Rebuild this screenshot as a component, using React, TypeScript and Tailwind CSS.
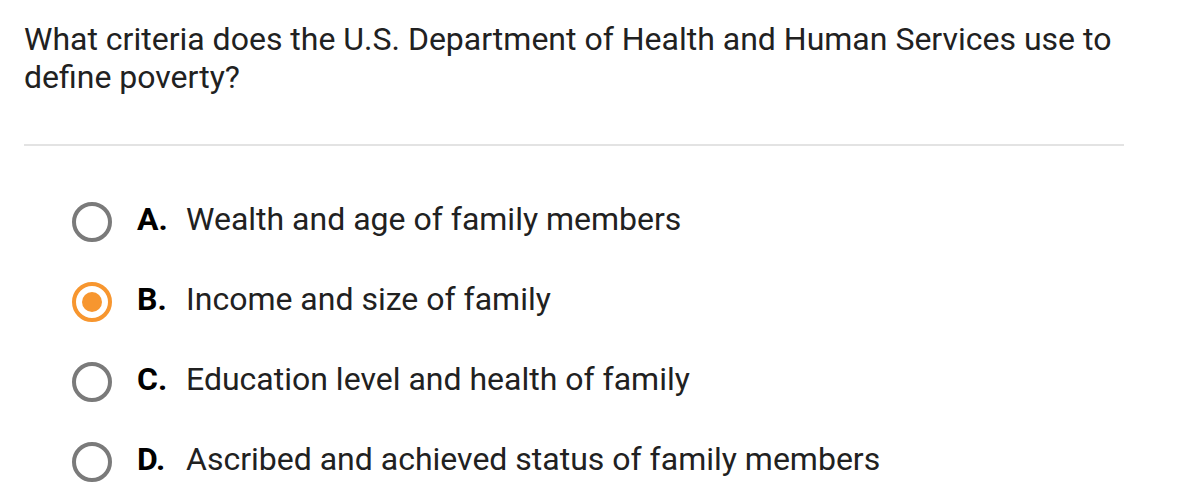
const options = [
  { letter: "A.", text: "Wealth and age of family members", selected: false },
  { letter: "B.", text: "Income and size of family", selected: true },
  { letter: "C.", text: "Education level and health of family", selected: false },
  { letter: "D.", text: "Ascribed and achieved status of family members", selected: false },
];

function Radio({ selected }: { selected: boolean }) {
  if (selected) {
    return (
      <span className="mt-[5px] flex h-[40px] w-[40px] shrink-0 items-center justify-center rounded-full border-[4px] border-[#f7962f]">
        <span className="h-[20px] w-[20px] rounded-full bg-[#f7962f]" />
      </span>
    );
  }
  return <span className="mt-[5px] h-[40px] w-[40px] shrink-0 rounded-full border-[4px] border-[#7a7a7a]" />;
}

export default function App() {
  return (
    <div className="min-h-screen bg-white pl-[24px] pr-[60px] pt-[20px] text-[#212121] [font-family:Roboto,'Noto_Sans',sans-serif]">
      <h1 className="text-[32px] font-normal leading-[38px]">
        What criteria does the U.S. Department of Health and Human Services use to define poverty?
      </h1>
      <div className="mt-[48px] h-[2px] w-[1100px] bg-[#e3e3e3]" />
      <div className="mt-[53px] flex flex-col gap-[40px] pl-[48px]">
        {options.map((o) => (
          <div key={o.letter} className="flex h-[40px] items-center">
            <Radio selected={o.selected} />
            <span className="ml-[25px] w-[49px] text-[32px] font-bold text-black">{o.letter}</span>
            <span className="text-[32px]">{o.text}</span>
          </div>
        ))}
      </div>
    </div>
  );
}
